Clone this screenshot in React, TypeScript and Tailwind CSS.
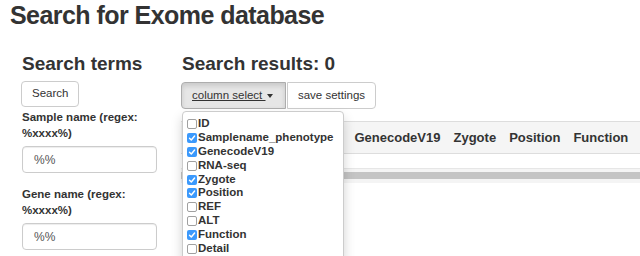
import React from "react";

const columns: [string, boolean][] = [
  ["ID", false],
  ["Samplename_phenotype", true],
  ["GenecodeV19", true],
  ["RNA-seq", false],
  ["Zygote", true],
  ["Position", true],
  ["REF", false],
  ["ALT", false],
  ["Function", true],
  ["Detail", false],
];

const visible = ["GenecodeV19", "Zygote", "Position", "Function"];

function Check({ on }: { on: boolean }) {
  if (on) {
    return (
      <span className="inline-flex w-[10px] h-[10px] rounded-[2px] bg-[#3b99fc] items-center justify-center shrink-0">
        <svg width="8" height="8" viewBox="0 0 8 8">
          <path d="M1.5 4.2 L3.3 6 L6.6 2" stroke="#fff" strokeWidth="1.4" fill="none" strokeLinecap="round" strokeLinejoin="round" />
        </svg>
      </span>
    );
  }
  return <span className="inline-block w-[10px] h-[10px] rounded-[2px] border border-[#a0a0a0] bg-white shrink-0" />;
}

function Field({ label }: { label: string }) {
  return (
    <div>
      <div className="text-[11.5px] font-bold leading-[16px] w-[140px]">
        {label} (regex:
        <br />
        %xxxx%)
      </div>
      <div className="mt-[5px] w-[135px] h-[27px] border border-[#cccccc] rounded-[4px] shadow-[inset_0_1px_1px_rgba(0,0,0,0.075)] px-[11px] flex items-center text-[12px] text-[#555]">
        %%
      </div>
    </div>
  );
}

export default function App() {
  return (
    <div
      className="w-[640px] h-[256px] overflow-hidden bg-white text-[#333]"
      style={{ fontFamily: '"Liberation Sans", Arial, sans-serif' }}
    >
      <h1 className="pl-[10px] text-[25px] leading-[30px] font-bold tracking-[-0.55px] h-[53px]">
        Search for Exome database
      </h1>

      <div className="flex">
        {/* left column */}
        <div className="w-[181px] shrink-0 pl-[21px]">
          <h3 className="pl-[1px] text-[19px] leading-[22px] font-bold">Search terms</h3>
          <button className="mt-[6px] h-[26px] px-[10px] border border-[#cccccc] rounded-[4px] bg-white text-[11.5px]">
            Search
          </button>
          <div className="mt-[2px] pl-[1px]">
            <Field label="Sample name" />
          </div>
          <div className="mt-[13px] pl-[1px]">
            <Field label="Gene name" />
          </div>
        </div>

        {/* right column */}
        <div className="flex-1 min-w-0">
          <h3 className="pl-[1px] text-[19px] leading-[22px] font-bold">Search results: 0</h3>
          <div className="relative mt-[7px]">
            <div className="flex">
              <button className="h-[27px] w-[105px] border border-[#adadad] rounded-l-[4px] bg-[#e6e6e6] shadow-[inset_0_3px_5px_rgba(0,0,0,0.125)] text-[11.5px] flex items-center pl-[10px]">
                <span className="underline">column select&nbsp;</span>
                <span className="ml-[1px] w-0 h-0 border-l-[3.5px] border-r-[3.5px] border-t-[4px] border-l-transparent border-r-transparent border-t-[#333]" />
              </button>
              <button className="h-[27px] w-[89px] border border-[#cccccc] rounded-r-[4px] bg-white text-[11.5px] ml-[1px]">
                save settings
              </button>
            </div>

            {/* table */}
            <div className="mt-[12px] w-[480px] overflow-hidden">
              <div className="flex h-[33px] items-center bg-[#f5f5f5] border-t border-b border-[#dddddd] text-[13px] font-bold whitespace-nowrap">
                <div className="w-[167px] shrink-0" />
                {visible.map((c) => (
                  <div key={c} className="px-[6.5px]">
                    {c}
                  </div>
                ))}
              </div>
              <div className="h-[14px]" />
              <div className="h-[15px] bg-[#f4f4f4] border-t border-[#e6e6e6] pt-[3px]">
                <div className="h-[7px] bg-[#c4c4c4]" />
              </div>
            </div>

            {/* dropdown menu */}
            <div className="absolute left-[1px] top-[29px] w-[162px] bg-white border border-[#cccccc] rounded-[4px] shadow-[0_6px_12px_rgba(0,0,0,0.175)] pt-[5px] pb-[4px] pl-[4px]">
              {columns.map(([name, on]) => (
                <div key={name} className="flex items-center h-[13.9px] text-[11.5px] font-bold leading-[13.9px] whitespace-nowrap">
                  <Check on={on} />
                  <span className="ml-[1px]">{name}</span>
                </div>
              ))}
            </div>
          </div>
        </div>
      </div>
    </div>
  );
}
